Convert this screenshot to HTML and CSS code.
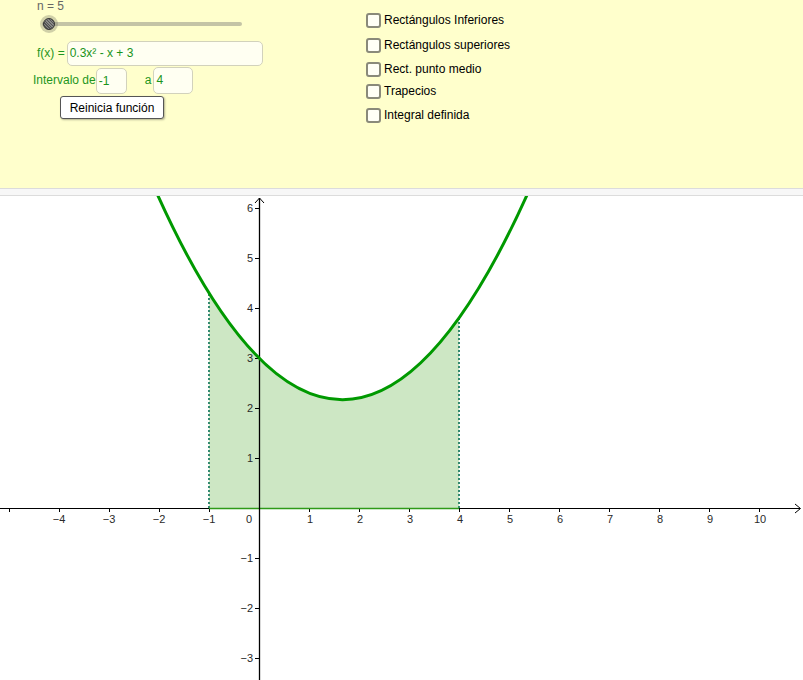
FILE: index.html
```html
<!DOCTYPE html>
<html>
<head>
<meta charset="utf-8">
<link rel="stylesheet" href="styles.css">
</head>
<body>
<div class="panel">
  <div class="left">
    <div class="nlabel">n = 5</div>
    <div class="slider">
      <div class="track"></div>
      <div class="knob"><div class="knob-in"></div></div>
    </div>
    <div class="row frow">
      <span class="lbl">f(x) =</span>
      <div class="box fbox">0.3x² - x + 3</div>
    </div>
    <div class="row irow">
      <span class="lbl">Intervalo de</span>
      <div class="box b1">-1</div>
      <span class="lbl alab">a</span>
      <div class="box b2">4</div>
    </div>
    <div class="btn">Reinicia función</div>
  </div>
  <div class="right">
    <div class="cb r1"><span class="chk"></span><span>Rectángulos Inferiores</span></div>
    <div class="cb r2"><span class="chk"></span><span>Rectángulos superiores</span></div>
    <div class="cb r3"><span class="chk"></span><span>Rect. punto medio</span></div>
    <div class="cb r4"><span class="chk"></span><span>Trapecios</span></div>
    <div class="cb r5"><span class="chk"></span><span>Integral definida</span></div>
  </div>
</div>
<div class="strip"></div>
<svg class="graph" width="803" height="484" viewBox="0 196 803 484" xmlns="http://www.w3.org/2000/svg">
  <path d="M209,508 L209,293 Q334,493 459,318 L459,508 Z" fill="#cde7c4"/>
  <line x1="209" y1="508" x2="209" y2="294" stroke="#338a70" stroke-width="2" stroke-dasharray="2 2"/>
  <line x1="459" y1="508" x2="459" y2="319" stroke="#338a70" stroke-width="2" stroke-dasharray="2 2"/>
  <g stroke="#000" stroke-width="1">
    <line x1="0" y1="508.5" x2="800" y2="508.5"/>
    <path d="M795,504 L800.5,508.5 L795,513" fill="none"/>
    <line x1="9.5" y1="508" x2="9.5" y2="512"/>
    <line x1="59.5" y1="508" x2="59.5" y2="512"/>
    <line x1="109.5" y1="508" x2="109.5" y2="512"/>
    <line x1="159.5" y1="508" x2="159.5" y2="512"/>
    <line x1="209.5" y1="508" x2="209.5" y2="512"/>
    <line x1="309.5" y1="508" x2="309.5" y2="512"/>
    <line x1="359.5" y1="508" x2="359.5" y2="512"/>
    <line x1="409.5" y1="508" x2="409.5" y2="512"/>
    <line x1="459.5" y1="508" x2="459.5" y2="512"/>
    <line x1="509.5" y1="508" x2="509.5" y2="512"/>
    <line x1="559.5" y1="508" x2="559.5" y2="512"/>
    <line x1="609.5" y1="508" x2="609.5" y2="512"/>
    <line x1="659.5" y1="508" x2="659.5" y2="512"/>
    <line x1="709.5" y1="508" x2="709.5" y2="512"/>
    <line x1="759.5" y1="508" x2="759.5" y2="512"/>
    <line x1="255" y1="208.5" x2="259" y2="208.5"/>
    <line x1="255" y1="258.5" x2="259" y2="258.5"/>
    <line x1="255" y1="308.5" x2="259" y2="308.5"/>
    <line x1="255" y1="358.5" x2="259" y2="358.5"/>
    <line x1="255" y1="408.5" x2="259" y2="408.5"/>
    <line x1="255" y1="458.5" x2="259" y2="458.5"/>
    <line x1="255" y1="558.5" x2="259" y2="558.5"/>
    <line x1="255" y1="608.5" x2="259" y2="608.5"/>
    <line x1="255" y1="658.5" x2="259" y2="658.5"/>
  </g>
  <line x1="209" y1="508.5" x2="459" y2="508.5" stroke="#2e9a18" stroke-width="1.5"/>
  <g stroke="#000" stroke-width="1.3">
    <line x1="259.5" y1="198" x2="259.5" y2="680"/>
    <path d="M255,203 L259.5,198 L264,203" fill="none" stroke-width="1"/>
  </g>
  <path d="M154,186.85 Q342.75,613.43 531.5,184.96" fill="none" stroke="#009900" stroke-width="3"/>
  <g font-family="'Liberation Sans', Arial, sans-serif" font-size="11" fill="#2a2a2a">
    <text x="59" y="523" text-anchor="middle">−4</text>
    <text x="109" y="523" text-anchor="middle">−3</text>
    <text x="159" y="523" text-anchor="middle">−2</text>
    <text x="209" y="523" text-anchor="middle">−1</text>
    <text x="249" y="523" text-anchor="middle">0</text>
    <text x="310" y="523" text-anchor="middle">1</text>
    <text x="360" y="523" text-anchor="middle">2</text>
    <text x="410" y="523" text-anchor="middle">3</text>
    <text x="460" y="523" text-anchor="middle">4</text>
    <text x="510" y="523" text-anchor="middle">5</text>
    <text x="560" y="523" text-anchor="middle">6</text>
    <text x="610" y="523" text-anchor="middle">7</text>
    <text x="660" y="523" text-anchor="middle">8</text>
    <text x="710" y="523" text-anchor="middle">9</text>
    <text x="760" y="523" text-anchor="middle">10</text>
    <text x="253" y="212" text-anchor="end">6</text>
    <text x="253" y="262" text-anchor="end">5</text>
    <text x="253" y="312" text-anchor="end">4</text>
    <text x="253" y="362" text-anchor="end">3</text>
    <text x="253" y="412" text-anchor="end">2</text>
    <text x="253" y="462" text-anchor="end">1</text>
    <text x="253" y="562" text-anchor="end">−1</text>
    <text x="253" y="612" text-anchor="end">−2</text>
    <text x="253" y="662" text-anchor="end">−3</text>
  </g>
</svg>
</body>
</html>
```
FILE: styles.css
```css
html, body {
  margin: 0;
  padding: 0;
  background: #fff;
  width: 803px;
  height: 680px;
  overflow: hidden;
  font-family: "Liberation Sans", Arial, sans-serif;
  font-size: 12px;
}
.panel {
  height: 188px;
  background: #ffffcc;
  display: flex;
}
.left {
  width: 366px;
  display: flex;
  flex-direction: column;
}
.nlabel {
  color: #666;
  margin-left: 37px;
  height: 13px;
  line-height: 12px;
}
.slider {
  position: relative;
  height: 27px;
}
.track {
  position: absolute;
  left: 42px;
  top: 9px;
  width: 200px;
  height: 4px;
  border-radius: 2px;
  background: #c4c4a6;
}
.knob {
  position: absolute;
  left: 40px;
  top: 2px;
  width: 18px;
  height: 18px;
  border-radius: 50%;
  background: rgba(120, 120, 100, 0.35);
  display: flex;
  align-items: center;
  justify-content: center;
}
.knob-in {
  width: 12px;
  height: 12px;
  border-radius: 50%;
  background: repeating-linear-gradient(45deg, #555 0 1px, #888 1px 2px);
  border: 1px solid #333;
  box-sizing: border-box;
}
.row {
  display: flex;
  align-items: center;
}
.lbl {
  color: #1e961e;
}
.frow {
  margin-left: 37px;
  height: 26px;
}
.box {
  box-sizing: border-box;
  border: 1px solid #d2d2bc;
  border-radius: 5px;
  background: #fffff2;
  color: #1a941a;
  padding-left: 2px;
  display: flex;
  align-items: center;
}
.fbox {
  width: 196px;
  height: 25px;
  margin-left: 2px;
}
.irow {
  margin-left: 33px;
  height: 28px;
}
.b1 {
  width: 31px;
  height: 26px;
  margin-top: 2px;
}
.alab {
  margin-left: 18px;
  margin-right: 2px;
}
.b2 {
  width: 40px;
  height: 27px;
}
.btn {
  box-sizing: border-box;
  margin-left: 60px;
  margin-top: 2px;
  width: 104px;
  height: 23px;
  border: 1px solid #555;
  border-radius: 3px;
  background: #fff;
  box-shadow: 1px 1px 2px rgba(0,0,0,0.3);
  display: flex;
  align-items: center;
  justify-content: center;
  color: #000;
}
.right {
  display: flex;
  flex-direction: column;
  padding-top: 13px;
}
.cb {
  display: flex;
  align-items: center;
  height: 14px;
  color: #000;
}
.cb .chk {
  box-sizing: border-box;
  width: 15px;
  height: 15px;
  border: 2px solid #8a8a7a;
  border-radius: 3px;
  background: #fffff6;
  margin-right: 3px;
}
.r2 { margin-top: 11px; }
.r3 { margin-top: 10px; }
.r4 { margin-top: 8px; }
.r5 { margin-top: 10px; }
.strip {
  box-sizing: border-box;
  height: 8px;
  background: #f7f7f7;
  border-top: 1px solid #dcdcdc;
  border-bottom: 1px solid #dcdcdc;
}
.graph {
  display: block;
}
```
